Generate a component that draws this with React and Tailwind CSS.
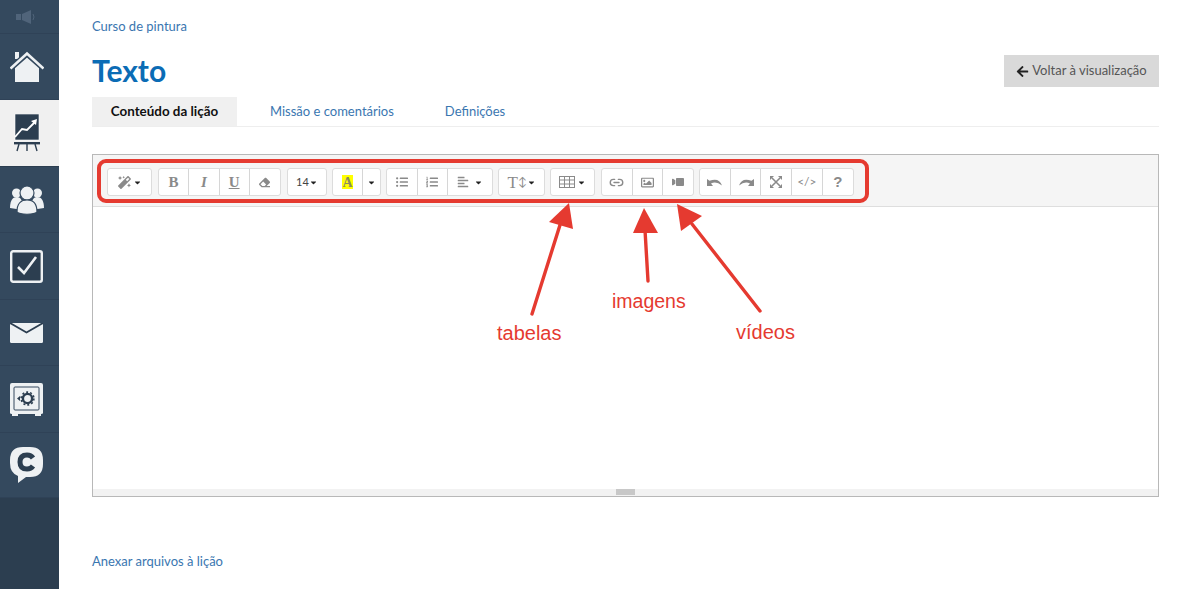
import { FaMagic, FaEraser, FaListUl, FaListOl, FaAlignLeft, FaRegImage, FaVideo, FaArrowLeft, FaCaretDown } from 'react-icons/fa';
import { Link2 } from 'lucide-react';

const font = "font-['Lato','Open_Sans',sans-serif]";

function Caret() {
  return <FaCaretDown size={9} className="text-[#222]" />;
}

function HomeIcon() {
  return (
    <svg width="34" height="32" viewBox="0 0 34 32">
      <rect x="5" y="1" width="4" height="7" fill="#eef1f3" />
      <path d="M5 16 L17 6 L29 16 V31 H5 Z" fill="#eef1f3" />
      <path d="M0 18 L17 3 L34 18" fill="none" stroke="#34495e" strokeWidth="5.5" />
      <path d="M0.5 17.5 L17 2.5 L33.5 17.5" fill="none" stroke="#eef1f3" strokeWidth="2.6" />
    </svg>
  );
}

function ChartIcon() {
  return (
    <svg width="26" height="38" viewBox="0 0 26 38">
      <rect x="1" y="0" width="24" height="26" fill="#2c3e50" stroke="#fff" strokeWidth="0.6" />
      <path d="M1 23 L8 15 L13 16 L21 8" fill="none" stroke="#fff" strokeWidth="1.8" />
      <path d="M23 5 L17 7 L22 11 Z" fill="#fff" />
      <rect x="0" y="28" width="26" height="2.4" fill="#2c3e50" />
      <path d="M5 30 L3 37 M13 30 V37 M21 30 L23 37" stroke="#2c3e50" strokeWidth="1.4" />
    </svg>
  );
}

function UsersIcon() {
  return (
    <svg width="34" height="30" viewBox="0 0 34 30">
      <circle cx="6.5" cy="8" r="4.5" fill="#eef1f3" />
      <circle cx="27.5" cy="8" r="4.5" fill="#eef1f3" />
      <path d="M0 23 C0 15 3 12 7 12 C11 12 13 16 13 25 Z" fill="#eef1f3" />
      <path d="M34 23 C34 15 31 12 27 12 C23 12 21 16 21 25 Z" fill="#eef1f3" />
      <circle cx="17" cy="8" r="7" fill="#eef1f3" stroke="#34495e" strokeWidth="1.2" />
      <path d="M7 27 C7 18 11 15 17 15 C23 15 27 18 27 27 C24 30 10 30 7 27 Z" fill="#eef1f3" stroke="#34495e" strokeWidth="1.2" />
    </svg>
  );
}

function CheckIcon() {
  return (
    <svg width="33" height="33" viewBox="0 0 33 33">
      <rect x="1.2" y="1.2" width="30.6" height="30.6" rx="2" fill="#2c3e50" stroke="#eef1f3" strokeWidth="2.4" />
      <path d="M8 17 L14 23 L26 7" fill="none" stroke="#eef1f3" strokeWidth="2.6" />
    </svg>
  );
}

function MailIcon() {
  return (
    <svg width="33" height="20" viewBox="0 0 33 20">
      <rect x="0" y="0" width="33" height="20" rx="1.5" fill="#eef1f3" />
      <path d="M0 0 L16.5 9.5 L33 0" fill="none" stroke="#2c3e50" strokeWidth="1.8" />
    </svg>
  );
}

function SafeIcon() {
  return (
    <svg width="33" height="33" viewBox="0 0 33 33">
      <path d="M2 0 H31 Q33 0 33 2 V30 Q33 31 31 31 V33 H25 V31 H8 V33 H2 V31 Q0 31 0 30 V2 Q0 0 2 0 Z" fill="#eef1f3" />
      <rect x="4" y="4" width="25" height="23" rx="1" fill="none" stroke="#34495e" strokeWidth="1" />
      <circle cx="17.5" cy="15.5" r="4.6" fill="none" stroke="#2c3e50" strokeWidth="2.4" />
      <circle cx="17.5" cy="15.5" r="6.4" fill="none" stroke="#2c3e50" strokeWidth="1.6" strokeDasharray="2 2" />
      <path d="M7 15.5 L10 13 V18 Z" fill="#2c3e50" />
    </svg>
  );
}

function ChatIcon() {
  return (
    <svg width="33" height="36" viewBox="0 0 33 36">
      <path d="M13 0 H20 Q33 0 33 13 V17 Q33 30 20 30 H16 L8 36 L8 29 Q0 26 0 16 V13 Q0 0 13 0 Z" fill="#eef1f3" />
      <path d="M23 11 Q21 8 17 8 Q10 8 10 15 Q10 22 17 22 Q21 22 23 19" fill="none" stroke="#2c3e50" strokeWidth="5" />
    </svg>
  );
}

function SpeakerIcon() {
  return (
    <svg width="21" height="14" viewBox="0 0 21 14">
      <rect x="0" y="4" width="5" height="6" fill="#50647a" />
      <path d="M6 4 L15 0 V14 L6 10 Z" fill="#50647a" />
      <path d="M17 4 Q19 7 17 10" fill="none" stroke="#50647a" strokeWidth="1" />
    </svg>
  );
}

const navItems = [
  { icon: <HomeIcon />, h: 'h-[66px]' },
  { icon: <ChartIcon />, h: 'h-[67px]', active: true },
  { icon: <UsersIcon />, h: 'h-[66px]' },
  { icon: <CheckIcon />, h: 'h-[67px]' },
  { icon: <MailIcon />, h: 'h-[66px]' },
  { icon: <SafeIcon />, h: 'h-[67px]' },
  { icon: <ChatIcon />, h: 'h-[65px]' },
];

function Sidebar() {
  return (
    <aside className="w-[59px] shrink-0 bg-[#2c3e50] flex flex-col">
      <div className="h-[34px] pr-[6px] bg-[#34495e] border-b border-[#2f4257] flex items-center justify-center">
        <SpeakerIcon />
      </div>
      {navItems.map((item, i) => (
        <div
          key={i}
          className={`${item.h} pr-[6px] flex items-center justify-center border-b ${
            item.active ? 'bg-[#f0f0f0] border-[#2c3e50]' : 'bg-[#34495e] border-[#2f4257]'
          }`}
        >
          {item.icon}
        </div>
      ))}
    </aside>
  );
}

function Btn({ children, className = 'w-[30.25px]' }) {
  return (
    <div className={`${className} h-full flex items-center justify-center gap-[2px] text-[#8a8a8a] border-r border-[#d6d6d6] last:border-r-0`}>
      {children}
    </div>
  );
}

function Group({ children, className = '' }) {
  return (
    <div className={`h-[28px] flex bg-white border border-[#dcdcdc] rounded-[3px] ${className}`}>
      {children}
    </div>
  );
}

function Serif({ children, className = '' }) {
  return <span className={`font-['Liberation_Serif',serif] text-[15px] leading-none ${className}`}>{children}</span>;
}

function TableIcon() {
  return (
    <svg width="16" height="12" viewBox="0 0 16 12" fill="none" stroke="#8a8a8a" strokeWidth="1">
      <rect x="0.5" y="0.5" width="15" height="11" />
      <path d="M0 4H16M0 8H16M5.5 0V12M10.5 0V12" />
    </svg>
  );
}

function UndoIcon({ flip }) {
  return (
    <svg width="16" height="10" viewBox="0 0 16 10" className={flip ? '-scale-x-100' : ''}>
      <path d="M0 2 V9 H6 L4 6.5 Q9 3.5 15 8.5 Q12 0 2.5 3.8 Z" fill="#8a8a8a" />
    </svg>
  );
}

function ExpandIcon() {
  return (
    <svg width="12" height="12" viewBox="0 0 12 12" fill="#8a8a8a" stroke="#8a8a8a">
      <path d="M2 2 L10 10 M10 2 L2 10" strokeWidth="1.6" />
      <path d="M0 0 H4 L0 4 Z M12 0 H8 L12 4 Z M0 12 H4 L0 8 Z M12 12 H8 L12 8 Z" stroke="none" />
    </svg>
  );
}

function Toolbar() {
  return (
    <div className="relative h-[52px] bg-[#f5f5f5] border-b border-[#dedede] pl-[14px] pt-[13px] flex gap-[5px]">
      <Group>
        <Btn className="w-[43px]"><FaMagic size={13} /><Caret /></Btn>
      </Group>
      <Group className="ml-px">
        <Btn><Serif className="font-bold">B</Serif></Btn>
        <Btn><Serif className="italic font-bold">I</Serif></Btn>
        <Btn><Serif className="underline font-bold">U</Serif></Btn>
        <Btn><FaEraser size={11} /></Btn>
      </Group>
      <Group className="ml-px">
        <Btn className={`w-[38px] text-[11px] !text-[#444] !gap-0 ${font}`}>14<Caret /></Btn>
      </Group>
      <Group>
        <Btn>
          <span className="bg-[#ffff00] w-[11px] h-[14px] flex items-center justify-center text-[14px] font-bold text-[#8a8a60] font-['Liberation_Serif',serif]">A</span>
        </Btn>
        <Btn className="w-[17px]"><Caret /></Btn>
      </Group>
      <Group>
        <Btn><FaListUl size={12} /></Btn>
        <Btn><FaListOl size={12} /></Btn>
        <Btn className="w-[44.5px]"><FaAlignLeft size={12} /><span className="w-px" /><Caret /></Btn>
      </Group>
      <Group>
        <Btn className="w-[45px] !gap-0"><Serif className="text-[17px]">T</Serif><span className="text-[12px] leading-none">↕</span><Caret /></Btn>
      </Group>
      <Group>
        <Btn className="w-[43px]"><TableIcon /><Caret /></Btn>
      </Group>
      <Group className="ml-px">
        <Btn className="w-[30.33px]"><Link2 size={15} strokeWidth={2.2} /></Btn>
        <Btn className="w-[30.33px]"><FaRegImage size={13} /></Btn>
        <Btn className="w-[30.33px]"><FaVideo size={12} className="-scale-x-100" /></Btn>
      </Group>
      <Group>
        <Btn className="w-[30.6px]"><UndoIcon /></Btn>
        <Btn className="w-[30.6px]"><UndoIcon flip /></Btn>
        <Btn className="w-[30.6px]"><ExpandIcon /></Btn>
        <Btn className={`w-[30.6px] text-[12px] ${font}`}>&lt;/&gt;</Btn>
        <Btn className="w-[30.6px] text-[15px] font-bold font-['Liberation_Sans',sans-serif]">?</Btn>
      </Group>
      {/* red marker drawn over the toolbar */}
      <div className="absolute left-[4px] top-[4px] w-[772px] h-[44px] border-4 border-[#e53a30] rounded-[9px]" />
    </div>
  );
}

function Annotations() {
  return (
    <>
      <svg className="absolute left-0 top-0 pointer-events-none" width="1200" height="589">
        <g stroke="#e53a30" strokeWidth="3.4" strokeLinecap="round" fill="#e53a30">
          <path d="M532 314 L560 225" />
          <path d="M648 281 L645 230" />
          <path d="M760 311 L692 224" />
        </g>
        <g fill="#e53a30">
          <path d="M569 203 L549 222 L573 229 Z" />
          <path d="M644 208 L633 233 L658 233 Z" />
          <path d="M677 204 L681 231 L702 216 Z" />
        </g>
      </svg>
      <span className="absolute left-[497px] top-[321px] text-[20px] leading-6 text-[#e53a30] font-['Liberation_Sans',sans-serif]">tabelas</span>
      <span className="absolute left-[612px] top-[289px] text-[19.5px] leading-6 text-[#e53a30] font-['Liberation_Sans',sans-serif]">imagens</span>
      <span className="absolute left-[736px] top-[320px] text-[20px] leading-6 text-[#e53a30] font-['Liberation_Sans',sans-serif]">vídeos</span>
    </>
  );
}

export default function App() {
  return (
    <div className={`relative h-[589px] w-[1200px] overflow-hidden flex bg-white ${font}`}>
      <Sidebar />
      <main className="flex-1 pl-[33px] pr-[41px]">
        <div className="pt-[17px] h-[55px] text-[13px] leading-[18px] text-[#3a76b0]">Curso de pintura</div>
        <div className="flex justify-between items-start h-[42px]">
          <h1 className="text-[30px] leading-[30px] font-bold text-[#0b6cb5]">Texto</h1>
          <div className="w-[155px] h-[32px] bg-[#d9d9d9] flex items-center justify-center gap-[3px] text-[13px] text-[#555]">
            <FaArrowLeft size={13} className="text-[#222]" />
            Voltar à visualização
          </div>
        </div>
        <div className="flex h-[30px] border-b border-[#eeeeee] text-[13px]">
          <div className="w-[145px] bg-[#f0f0f0] flex items-center justify-center font-bold text-[13.4px] text-[#111]">Conteúdo da lição</div>
          <div className="ml-[33px] flex items-center text-[#3a76b0]">Missão e comentários</div>
          <div className="ml-[51px] flex items-center text-[#3a76b0]">Definições</div>
        </div>
        <div className="mt-[27px] h-[343px] border border-[#b8b8b8] flex flex-col">
          <Toolbar />
          <div className="flex-1" />
          <div className="h-[7px] bg-[#f2f2f2] flex justify-center">
            <div className="w-[19px] h-[6px] bg-[#c8c8c8]" />
          </div>
        </div>
        <div className="mt-[55px] text-[13px] leading-[18px] text-[#3a76b0]">Anexar arquivos à lição</div>
      </main>
      <Annotations />
    </div>
  );
}
